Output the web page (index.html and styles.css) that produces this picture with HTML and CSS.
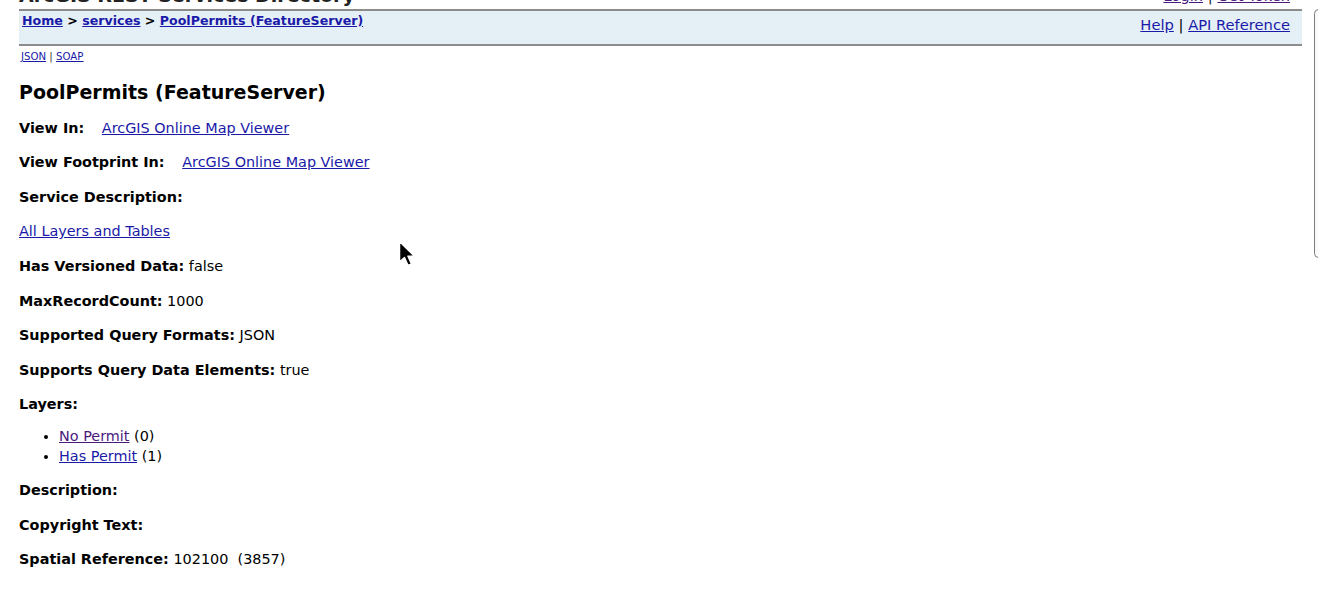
FILE: index.html
```html
<!DOCTYPE html>
<html>
<head>
<meta charset="utf-8">
<title>PoolPermits (FeatureServer)</title>
<link rel="stylesheet" href="styles.css">
</head>
<body>
<div class="page">
  <div class="userbar">
    <span class="dirtitle">ArcGIS REST Services Directory</span>
    <span class="userlinks"><a href="#" class="visited">Login</a> | <a href="#" class="visited">Get Token</a></span>
  </div>
  <div class="navbar">
    <div class="crumbs"><a href="#">Home</a> &gt; <a href="#">services</a> &gt; <a href="#">PoolPermits (FeatureServer)</a></div>
    <div class="help"><a href="#">Help</a> | <a href="#">API Reference</a></div>
  </div>
  <div class="formats"><a href="#">JSON</a> | <a href="#">SOAP</a></div>
  <h2 class="title">PoolPermits (FeatureServer)</h2>
  <div class="content">
    <p class="first"><b>View In:</b> <a href="#" class="gap">ArcGIS Online Map Viewer</a></p>
    <p><b>View Footprint In:</b> <a href="#" class="gap">ArcGIS Online Map Viewer</a></p>
    <p><b>Service Description:</b></p>
    <p><a href="#">All Layers and Tables</a></p>
    <p><b>Has Versioned Data:</b> false</p>
    <p><b>MaxRecordCount:</b> 1000</p>
    <p><b>Supported Query Formats:</b> JSON</p>
    <p><b>Supports Query Data Elements:</b> true</p>
    <p><b>Layers:</b></p>
    <ul class="layers">
      <li><a href="#" class="visited">No Permit</a> (0)</li>
      <li><a href="#">Has Permit</a> (1)</li>
    </ul>
    <p><b>Description:</b></p>
    <p><b>Copyright Text:</b></p>
    <p><b>Spatial Reference:</b> 102100&nbsp; (3857)</p>
  </div>
</div>
<div class="scrollthumb"></div>
<svg class="cursor" width="20" height="30" viewBox="0 0 20 30">
  <path d="M1.5 1.5 L1.5 22 L6.5 17.5 L10 25.5 L13.5 24 L10 16.2 L16.5 16.2 Z" fill="#000" stroke="#fff" stroke-width="1.5" stroke-linejoin="round"/>
</svg>
</body>
</html>
```
FILE: styles.css
```css
html, body {
  margin: 0;
  padding: 0;
  background: #fff;
  height: 600px;
  overflow: hidden;
}
body {
  font-family: "DejaVu Sans", Verdana, sans-serif;
  color: #000;
  position: relative;
}
a { color: #1a1aa8; text-decoration: underline; }
a.visited { color: #4b1a7e; }
.page {
  margin: -27px 16px 0 19px;
}
.userbar {
  display: flex;
  justify-content: space-between;
  align-items: flex-end;
  height: 36px;
  box-sizing: border-box;
  padding-bottom: 3px;
  font-size: 19px;
  font-weight: bold;
  color: #222;
}
.userbar .userlinks {
  font-size: 14.7px;
  font-weight: normal;
  margin-right: 12px;
  margin-bottom: 2px;
}
.navbar {
  display: flex;
  justify-content: space-between;
  background: #e5eff6;
  border-top: 2px solid #8c8c8c;
  border-bottom: 2px solid #8c8c8c;
  height: 33px;
  box-sizing: content-box;
}
.crumbs {
  font-size: 12.6px;
  font-weight: bold;
  padding: 2px 0 0 3px;
  line-height: 16px;
}
.help {
  font-size: 14.7px;
  padding: 5px 12px 0 0;
  line-height: 18px;
}
.formats {
  font-size: 10.2px;
  margin: 5px 0 0 2px;
  line-height: 12px;
  color: #333;
}
.title {
  font-size: 19px;
  font-weight: bold;
  margin: 17px 0 0 0;
  line-height: 24px;
}
.content {
  font-size: 14.4px;
  line-height: 20px;
}
.content p {
  margin: 14.6px 0 0 0;
}
.content p.first {
  margin-top: 13.6px;
}
.content .gap { margin-left: 13px; }
.layers {
  margin: 12px 0 -1px 0;
  padding-left: 40px;
}
.layers li { line-height: 20px; }
.scrollthumb {
  position: absolute;
  left: 1314px;
  top: 9px;
  width: 7px;
  height: 247px;
  border: 1.5px solid #7d7d7d;
  border-radius: 5px;
  background: #fafafa;
}
.cursor {
  position: absolute;
  left: 398px;
  top: 240px;
}
```
